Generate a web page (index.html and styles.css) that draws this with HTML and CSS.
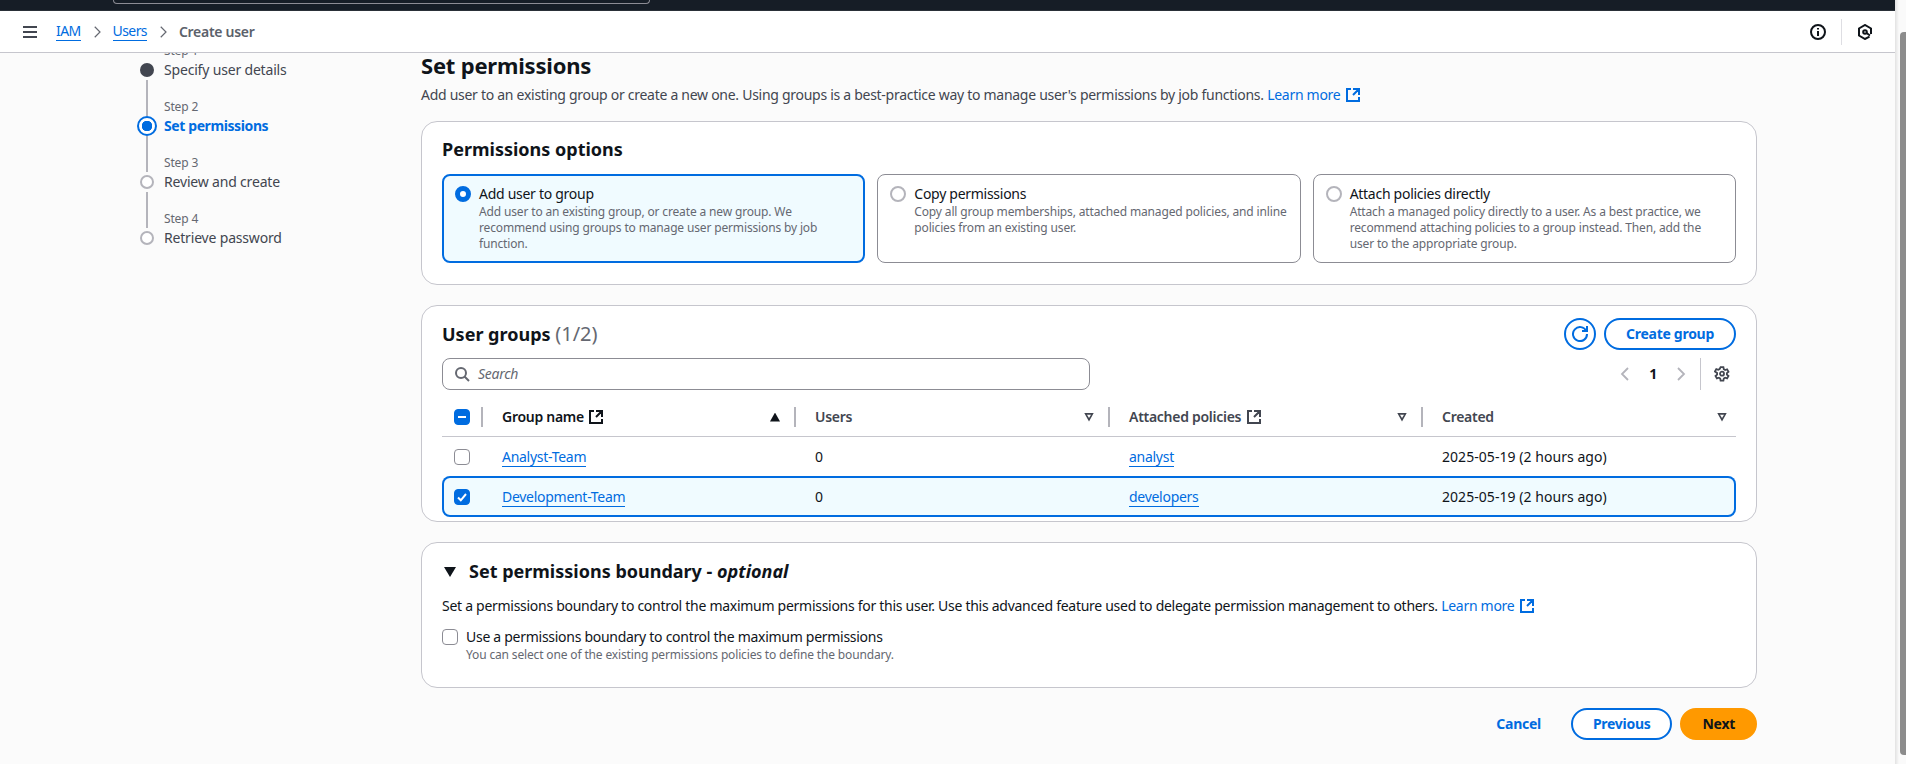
FILE: index.html
```html
<!DOCTYPE html>
<html lang="en">
<head>
    <meta charset="UTF-8">
    <meta name="viewport" content="width=device-width, initial-scale=1.0">
    <title>Create user | IAM</title>
    <link rel="stylesheet" href="styles.css">
</head>
<body>
    <div class="page">
        <div class="topbar"><div class="topsearch"></div></div>

        <header class="appbar">
            <svg class="icon menu" viewBox="0 0 16 16"><path d="M1 3h14M1 8h14M1 13h14"/></svg>
            <nav class="crumbs">
                <a href="#">IAM</a>
                <svg class="icon chev" viewBox="0 0 16 16"><path d="m5 1 7 7-7 7"/></svg>
                <a href="#">Users</a>
                <svg class="icon chev" viewBox="0 0 16 16"><path d="m5 1 7 7-7 7"/></svg>
                <span>Create user</span>
            </nav>
            <div class="appbar-tools">
                <svg class="icon tool" viewBox="0 0 16 16"><circle cx="8" cy="8" r="7"/><path d="M8 7v5M8 4v1.6"/></svg>
                <span class="tool-sep"></span>
                <svg class="icon tool" viewBox="0 0 16 16"><path d="M12.5 12.6 8 15l-6-3.5v-7L8 1l6 3.5V10"/><circle cx="8" cy="8" r="1.8"/><path d="m9.5 9 3.5 2.5"/></svg>
            </div>
        </header>

        <main class="main">
            <ol class="steps">
                <li class="step"><small>Step 1</small><i class="dot done"></i><span>Specify user details</span></li>
                <li class="step active"><small>Step 2</small><i class="dot current"></i><span>Set permissions</span></li>
                <li class="step"><small>Step 3</small><i class="dot"></i><span>Review and create</span></li>
                <li class="step"><small>Step 4</small><i class="dot"></i><span>Retrieve password</span></li>
            </ol>

            <div class="content">
                <h1>Set permissions</h1>
                <p class="lead">Add user to an existing group or create a new one. Using groups is a best-practice way to manage user's permissions by job functions. <a href="#" class="learn">Learn more <svg class="icon ext" viewBox="0 0 16 16"><path d="M14 8V2H8M14 2 8 8M6 2H2v12h12v-4"/></svg></a></p>

                <section class="card options">
                    <h2>Permissions options</h2>
                    <div class="tiles">
                        <div class="tile selected">
                            <i class="radio on"></i>
                            <div>
                                <div class="tile-title">Add user to group</div>
                                <div class="tile-desc">Add user to an existing group, or create a new group. We recommend using groups to manage user permissions by job function.</div>
                            </div>
                        </div>
                        <div class="tile">
                            <i class="radio"></i>
                            <div>
                                <div class="tile-title">Copy permissions</div>
                                <div class="tile-desc">Copy all group memberships, attached managed policies, and inline policies from an existing user.</div>
                            </div>
                        </div>
                        <div class="tile">
                            <i class="radio"></i>
                            <div>
                                <div class="tile-title">Attach policies directly</div>
                                <div class="tile-desc">Attach a managed policy directly to a user. As a best practice, we recommend attaching policies to a group instead. Then, add the user to the appropriate group.</div>
                            </div>
                        </div>
                    </div>
                </section>

                <section class="card groups">
                    <div class="groups-head">
                        <h2>User groups <span class="count">(1/2)</span></h2>
                        <div class="groups-actions">
                            <button class="btn round"><svg class="icon" viewBox="0 0 16 16"><path d="M10 5h5V0M15 8a7 7 0 1 1-.7-3"/></svg></button>
                            <button class="btn">Create group</button>
                        </div>
                    </div>
                    <div class="groups-tools">
                        <div class="search">
                            <svg class="icon" viewBox="0 0 16 16"><circle cx="7" cy="7" r="5"/><path d="m15 15-4.5-4.5"/></svg>
                            <span>Search</span>
                        </div>
                        <div class="pager">
                            <svg class="icon pg" viewBox="0 0 16 16"><path d="m11 2-6 6 6 6"/></svg>
                            <b>1</b>
                            <svg class="icon pg" viewBox="0 0 16 16"><path d="m5 2 6 6-6 6"/></svg>
                            <span class="pager-sep"></span>
                            <svg class="icon gear" viewBox="0 0 16 16"><path d="M6.6 1.2h2.8l.4 2 1.3.8 2-.7 1.4 2.4-1.6 1.4v1.5l1.6 1.4-1.4 2.4-2-.7-1.3.8-.4 2.1H6.6l-.4-2.1-1.3-.8-2 .7-1.4-2.4 1.6-1.4V6.9L.9 5.5l1.4-2.4 2 .7 1.3-.8z"/><circle cx="8" cy="7.7" r="2"/></svg>
                        </div>
                    </div>

                    <div class="row row-head">
                        <div class="cell-check"><i class="check mixed"></i></div>
                        <div class="th sorted"><span>Group name <svg class="icon ext" viewBox="0 0 16 16"><path d="M14 8V2H8M14 2 8 8M6 2H2v12h12v-4"/></svg></span><i class="tri up"></i></div>
                        <div class="th"><span>Users</span><i class="tri"></i></div>
                        <div class="th"><span>Attached policies <svg class="icon ext" viewBox="0 0 16 16"><path d="M14 8V2H8M14 2 8 8M6 2H2v12h12v-4"/></svg></span><i class="tri"></i></div>
                        <div class="th last"><span>Created</span><i class="tri"></i></div>
                    </div>
                    <div class="row">
                        <div class="cell-check"><i class="check"></i></div>
                        <div class="td"><a href="#">Analyst-Team</a></div>
                        <div class="td">0</div>
                        <div class="td"><a href="#">analyst</a></div>
                        <div class="td date">2025-05-19 (2 hours ago)</div>
                    </div>
                    <div class="row picked">
                        <div class="cell-check"><i class="check on"><svg viewBox="0 0 16 16"><path d="m4 8.5 2.8 2.8L12 5"/></svg></i></div>
                        <div class="td"><a href="#">Development-Team</a></div>
                        <div class="td">0</div>
                        <div class="td"><a href="#">developers</a></div>
                        <div class="td date">2025-05-19 (2 hours ago)</div>
                    </div>
                </section>

                <section class="card boundary">
                    <h2><i class="caret"></i>Set permissions boundary - <em>optional</em></h2>
                    <p class="boundary-desc">Set a permissions boundary to control the maximum permissions for this user. Use this advanced feature used to delegate permission management to others. <a href="#" class="learn">Learn more <svg class="icon ext" viewBox="0 0 16 16"><path d="M14 8V2H8M14 2 8 8M6 2H2v12h12v-4"/></svg></a></p>
                    <div class="boundary-opt">
                        <i class="check"></i>
                        <div>
                            <div class="opt-label">Use a permissions boundary to control the maximum permissions</div>
                            <div class="opt-hint">You can select one of the existing permissions policies to define the boundary.</div>
                        </div>
                    </div>
                </section>

                <div class="actions">
                    <a href="#" class="cancel">Cancel</a>
                    <button class="btn">Previous</button>
                    <button class="btn primary">Next</button>
                </div>
            </div>
        </main>
    </div>

    <div class="scrollbar"><div class="thumb"></div></div>
</body>
</html>
```

FILE: styles.css
```css
* {
    box-sizing: border-box;
}
html, body {
    height: 100%;
}
body {
    margin: 0;
    display: flex;
    overflow: hidden;
    background: #fbfbfb;
    color: #0f141a;
    font-family: "Noto Sans", "Open Sans", sans-serif;
    font-size: 14px;
    line-height: 20px;
    letter-spacing: -0.28px;
}
a {
    color: #006ce0;
    text-decoration: none;
}
h1, h2, p {
    margin: 0;
}
.icon {
    width: 16px;
    height: 16px;
    fill: none;
    stroke: currentColor;
    stroke-width: 2;
    flex: none;
}

/* page shell */
.page {
    flex: 1;
    min-width: 0;
    display: flex;
    flex-direction: column;
}
.topbar {
    height: 11px;
    flex: none;
    background: #161d26;
    border-bottom: 1px solid #2a3038;
    padding-left: 113px;
}
.topsearch {
    width: 537px;
    height: 4px;
    border: 1px solid #8c8c94;
    border-top: none;
    border-radius: 0 0 6px 6px;
}
.appbar {
    height: 42px;
    flex: none;
    display: flex;
    align-items: center;
    background: #fff;
    border-bottom: 1px solid #c6c6cd;
    padding: 0 22px;
    color: #424650;
}
.menu {
    margin-right: 18px;
}
.crumbs {
    display: flex;
    align-items: center;
    gap: 10px;
}
.crumbs a {
    border-bottom: 1px solid #006ce0;
    line-height: 18px;
    letter-spacing: -0.6px;
}
.crumbs span {
    font-weight: 600;
    color: #5b616b;
}
.chev {
    width: 12px;
    height: 12px;
    stroke: #656871;
    stroke-width: 1.6;
}
.appbar-tools {
    margin-left: auto;
    display: flex;
    align-items: center;
    gap: 15px;
    color: #0f141a;
}
.tool-sep {
    width: 1px;
    height: 26px;
    background: #dedee3;
}

/* main area */
.main {
    flex: 1;
    min-height: 0;
    overflow: hidden;
    display: flex;
}
.steps {
    list-style: none;
    width: 421px;
    flex: none;
    margin: -29px 0 0;
    padding: 0 0 0 136px;
}
.step {
    display: grid;
    grid-template-columns: 22px 1fr;
    grid-template-rows: 36px 20px;
    column-gap: 6px;
    color: #424650;
}
.step::before {
    content: "";
    grid-column: 1;
    grid-row: 1;
    justify-self: center;
    width: 2px;
    background: #b4b4bb;
}
.step:first-child::before {
    display: none;
}
.step small {
    grid-column: 2;
    grid-row: 1;
    align-self: end;
    margin-bottom: 1px;
    font-size: 12px;
    line-height: 16px;
    letter-spacing: -0.15px;
    color: #656871;
}
.step span {
    grid-column: 2;
    grid-row: 2;
    letter-spacing: -0.18px;
}
.step.active span {
    color: #006ce0;
    font-weight: 700;
    letter-spacing: -0.4px;
}
.dot {
    grid-column: 1;
    grid-row: 2;
    place-self: center;
    width: 14px;
    height: 14px;
    border-radius: 50%;
    border: 2px solid #b4b4bb;
    background: #fff;
}
.dot.done {
    background: #424650;
    border-color: #424650;
}
.dot.current {
    width: 20px;
    height: 20px;
    border-color: #006ce0;
    background: radial-gradient(circle, #006ce0 5px, #fff 5.5px);
}

.content {
    width: 1336px;
    flex: none;
    margin-top: -3px;
}
h1 {
    font-size: 22px;
    line-height: 30px;
    font-weight: 700;
    letter-spacing: -0.2px;
}
.lead {
    margin: 5px 0 16px;
    color: #424650;
}
.learn {
    white-space: nowrap;
}
.ext {
    vertical-align: -3px;
    margin-left: 1px;
}
.card {
    background: #fff;
    border: 1px solid #c6c6cd;
    border-radius: 16px;
    margin-bottom: 20px;
}
h2 {
    font-size: 18px;
    line-height: 24px;
    font-weight: 700;
    letter-spacing: 0;
}

/* permissions options */
.options {
    padding: 15px 20px 21px;
}
.tiles {
    display: grid;
    grid-template-columns: repeat(3, 1fr);
    gap: 12px;
    margin-top: 13px;
}
.tile {
    height: 89px;
    display: flex;
    gap: 8px;
    padding: 9px 12px 0 12px;
    border: 1px solid #8c8c94;
    border-radius: 8px;
}
.tile.selected {
    padding: 8px 11px 0 11px;
    border: 2px solid #006ce0;
    background: #f0fbff;
}
.tile-desc {
    font-size: 12px;
    line-height: 16px;
    letter-spacing: -0.15px;
    color: #656871;
}
.radio {
    flex: none;
    width: 16px;
    height: 16px;
    margin-top: 2px;
    border-radius: 50%;
    border: 2px solid #b4b4bb;
    background: #fff;
}
.radio.on {
    border: 5px solid #006ce0;
}

/* user groups table */
.groups {
    padding: 12px 20px 4px;
}
.groups-head, .groups-tools {
    display: flex;
    justify-content: space-between;
    align-items: center;
    height: 32px;
}
.groups-tools {
    margin-top: 8px;
}
.count {
    font-size: 20px;
    font-weight: 400;
    color: #656871;
}
.groups-actions {
    display: flex;
    gap: 8px;
}
.btn {
    height: 32px;
    padding: 0 20px;
    border: 2px solid #006ce0;
    border-radius: 16px;
    background: #fff;
    color: #006ce0;
    font: 700 14px/20px "Noto Sans", "Open Sans", sans-serif;
    letter-spacing: -0.28px;
}
.btn.round {
    width: 32px;
    padding: 0;
    display: flex;
    align-items: center;
    justify-content: center;
}
.search {
    width: 648px;
    height: 32px;
    display: flex;
    align-items: center;
    gap: 8px;
    padding: 0 11px;
    border: 1px solid #8c8c94;
    border-radius: 8px;
    background: #fff;
    color: #656871;
    font-style: italic;
}
.pager {
    display: flex;
    align-items: center;
    height: 32px;
    padding-right: 6px;
}
.pager b {
    width: 40px;
    text-align: center;
    font-weight: 700;
}
.pg {
    color: #b4b4bb;
    stroke-width: 1.8;
}
.pager-sep {
    width: 1px;
    height: 32px;
    background: #c6c6cd;
    margin: 0 13px 0 11px;
}
.gear {
    stroke-width: 1.8;
    color: #424650;
}
.row {
    display: grid;
    grid-template-columns: 39px 313px 314px 313px 1fr;
    align-items: center;
    height: 39px;
}
.row-head {
    margin-top: 8px;
    border-bottom: 1px solid #c6c6cd;
    font-weight: 600;
    color: #424650;
}
.row-head .sorted {
    color: #0f141a;
}
.cell-check {
    padding-left: 12px;
    display: flex;
}
.th {
    height: 20px;
    display: flex;
    align-items: center;
    justify-content: space-between;
    border-left: 2px solid #b4b4bb;
    padding: 0 14px 0 19px;
}
.th.last {
    padding-right: 9px;
}
.td {
    padding-left: 21px;
}
.td.date {
    letter-spacing: 0.05px;
}
.td a {
    border-bottom: 1px solid #006ce0;
    line-height: 18px;
    display: inline-block;
}
.row.picked {
    height: 41px;
    border-radius: 8px;
    background: #f0fbff;
    box-shadow: inset 0 0 0 2px #006ce0;
}
.check {
    flex: none;
    display: block;
    width: 16px;
    height: 16px;
    border: 1px solid #8c8c94;
    border-radius: 4px;
    background: #fff;
}
.check.on, .check.mixed {
    background: #006ce0;
    border-color: #006ce0;
}
.check.on svg {
    display: block;
    margin: -1px;
    width: 16px;
    height: 16px;
    fill: none;
    stroke: #fff;
    stroke-width: 2;
}
.check.mixed {
    position: relative;
}
.check.mixed::after {
    content: "";
    position: absolute;
    left: 3px;
    right: 3px;
    top: 6px;
    height: 2px;
    background: #fff;
}
.tri {
    width: 10px;
    height: 9px;
    background: #424650;
    clip-path: polygon(0 0, 100% 0, 50% 100%, 50% 62%, 70% 26%, 30% 26%, 50% 62%, 50% 100%);
}
.tri.up {
    background: #0f141a;
    clip-path: polygon(50% 0, 100% 100%, 0 100%);
}

/* boundary */
.boundary {
    height: 146px;
    padding: 16px 20px 0;
    margin-bottom: 20px;
}
.boundary h2 {
    display: flex;
    align-items: center;
    white-space: pre;
}
.boundary em {
    font-style: italic;
}
.caret {
    width: 12px;
    height: 10px;
    margin: 2px 13px 0 2px;
    background: #0f141a;
    clip-path: polygon(0 0, 100% 0, 50% 100%);
}
.boundary-desc {
    margin-top: 13px;
}
.boundary-opt {
    display: flex;
    gap: 8px;
    margin-top: 11px;
}
.boundary-opt .check {
    margin-top: 2px;
}
.opt-hint {
    font-size: 12px;
    line-height: 16px;
    letter-spacing: -0.15px;
    color: #656871;
}

/* footer buttons */
.actions {
    display: flex;
    justify-content: flex-end;
    align-items: center;
    gap: 8px;
}
.cancel {
    font-weight: 700;
    margin-right: 22px;
}
.btn.primary {
    background: #ff9900;
    border-color: #ff9900;
    color: #0f141a;
}

/* browser scrollbar */
.scrollbar {
    width: 11px;
    flex: none;
    padding: 32px 0 9px 5px;
    background: linear-gradient(90deg, #e2e2e2, #fafafa 4px);
}
.thumb {
    height: 100%;
    background: #8c8c8c;
    border-radius: 4px 0 0 4px;
}
```
